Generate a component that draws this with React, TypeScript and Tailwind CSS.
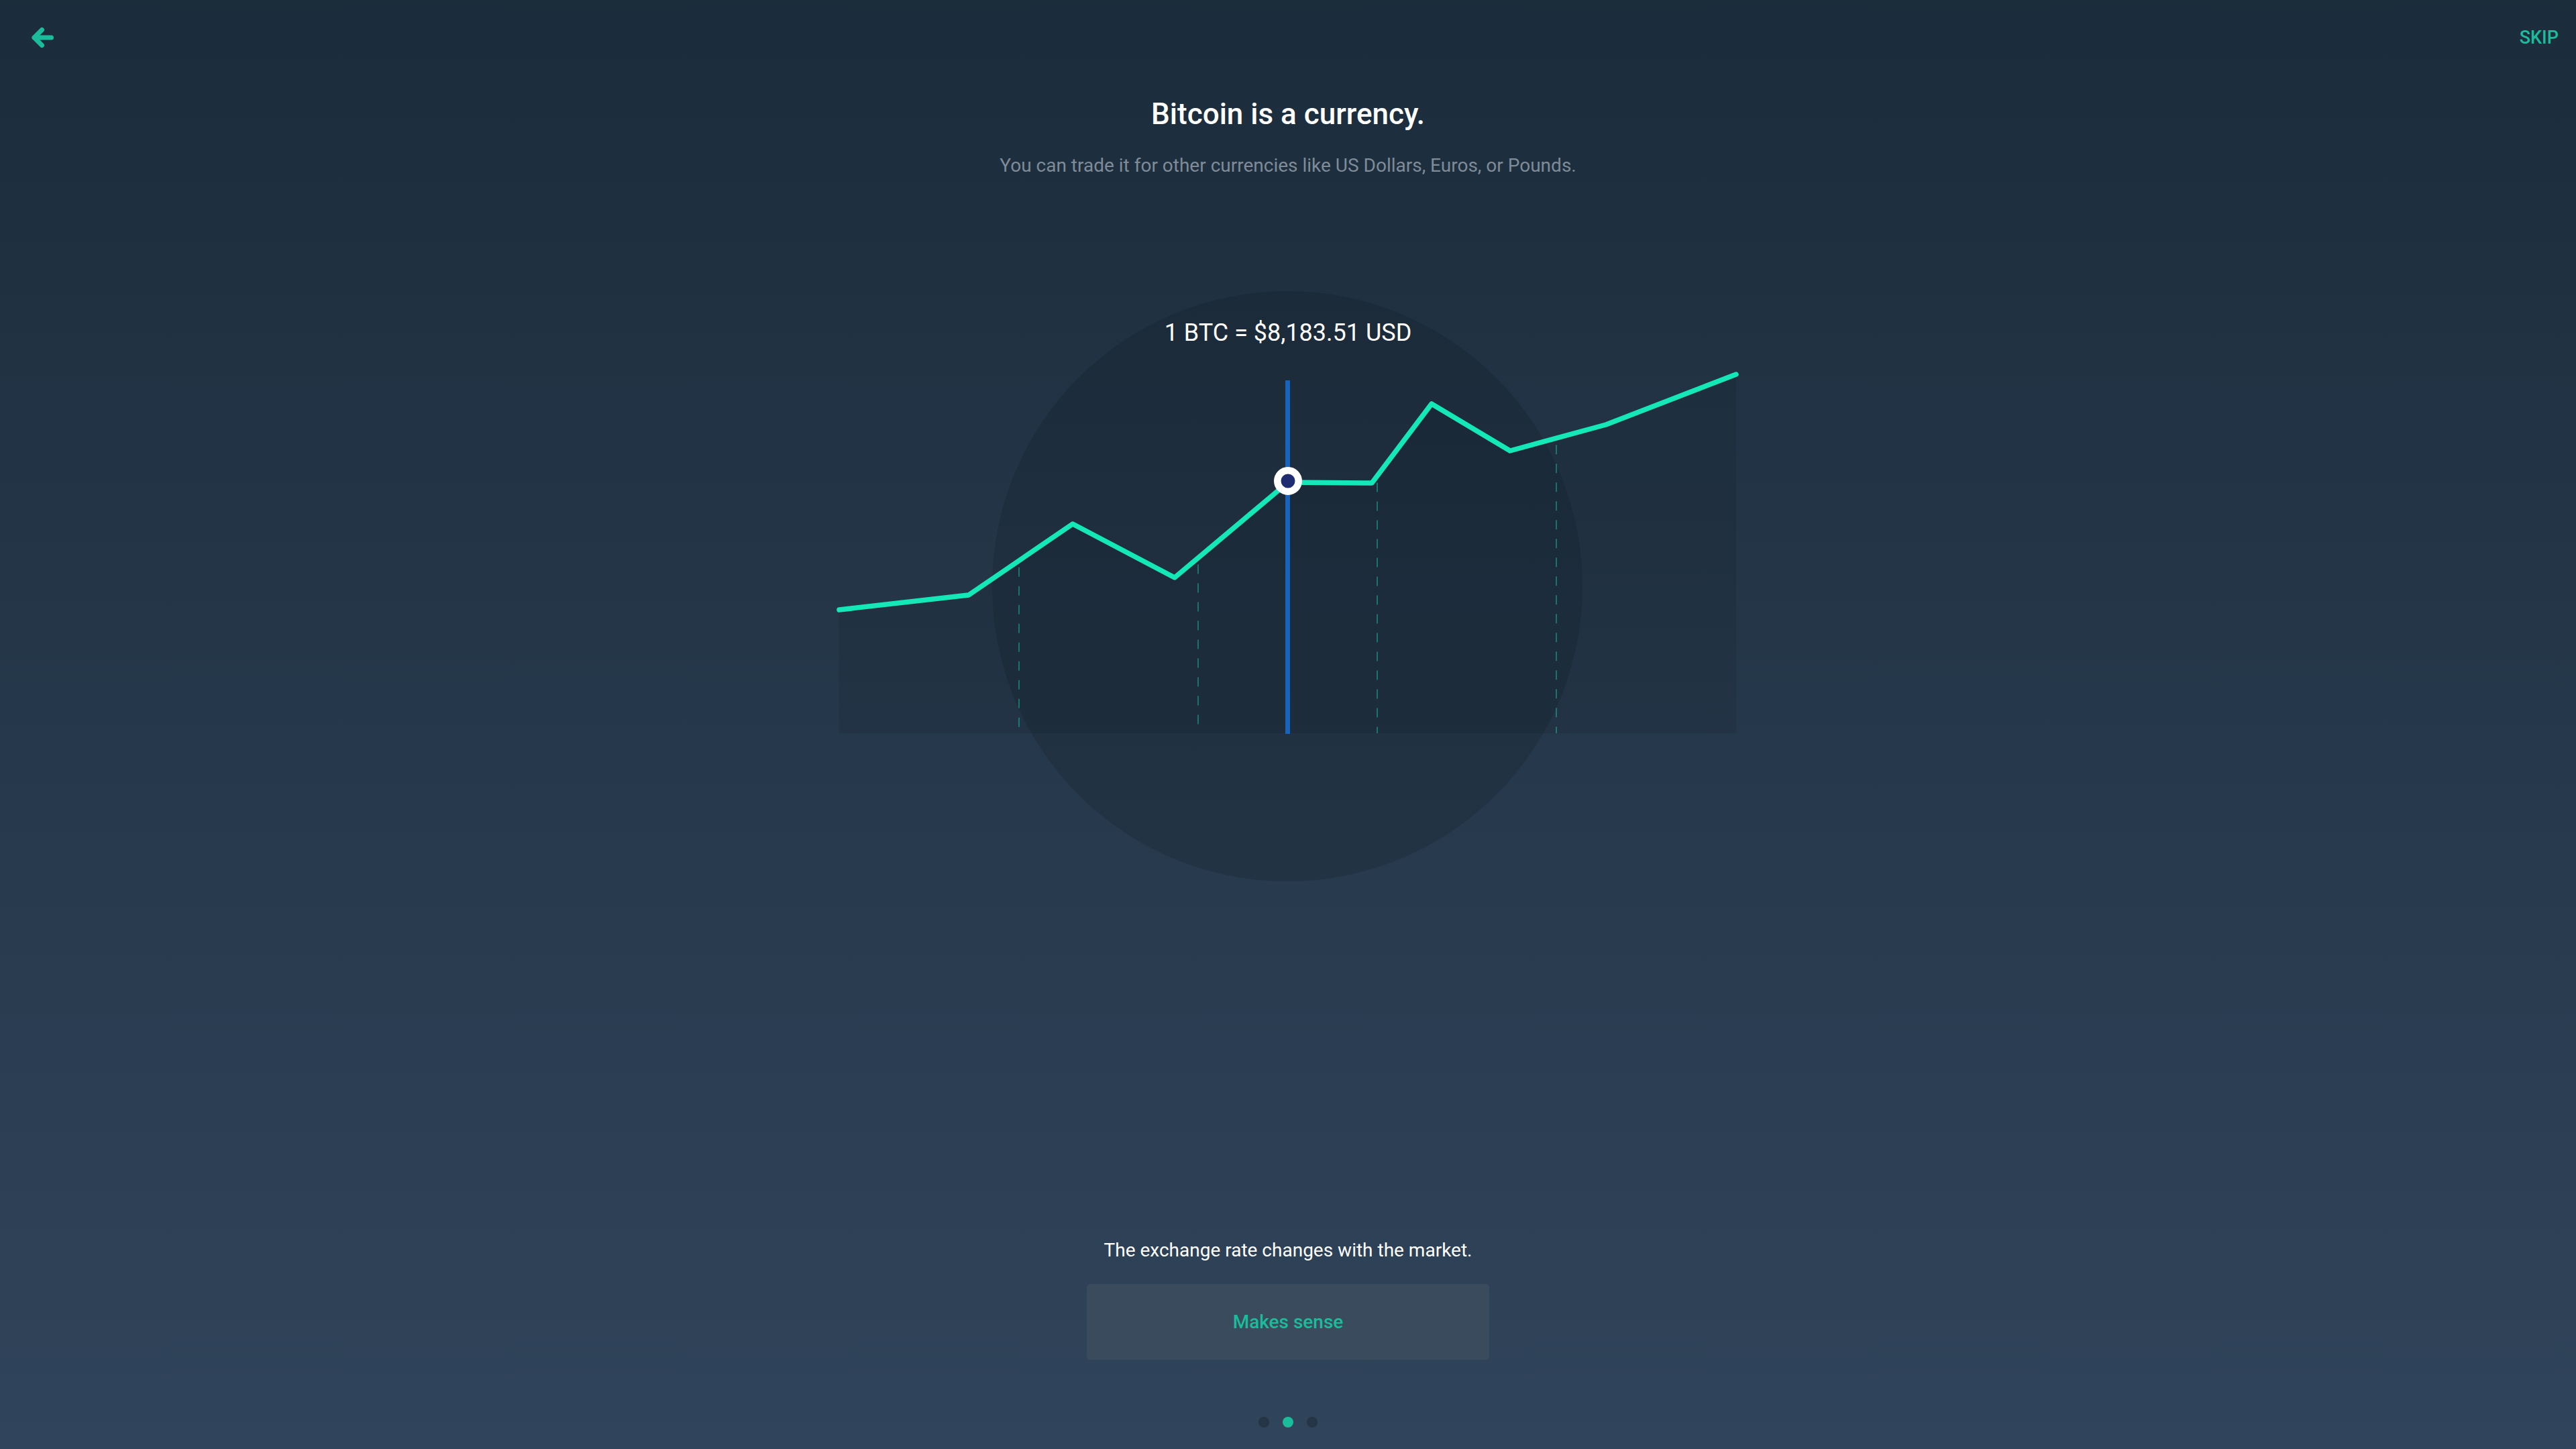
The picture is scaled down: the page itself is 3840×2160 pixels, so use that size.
import React from "react";

const pts: [number, number][] = [
  [1251, 909],
  [1444, 887],
  [1599, 781],
  [1751, 861],
  [1920, 719],
  [2045, 720],
  [2134, 602],
  [2251, 672],
  [2394, 633],
  [2588, 558],
];

function yAt(x: number): number {
  for (let i = 0; i < pts.length - 1; i++) {
    const [x1, y1] = pts[i];
    const [x2, y2] = pts[i + 1];
    if (x >= x1 && x <= x2) {
      return y1 + ((x - x1) / (x2 - x1)) * (y2 - y1);
    }
  }
  return 1093;
}

function Chart() {
  const line = pts.map((p) => p.join(",")).join(" ");
  const area = line + " 2588,1093 1251,1093";
  const grid = [1519, 1786, 2053, 2320];
  return (
    <div className="relative w-[1400px] h-[900px]">
      <svg
        width="1400"
        height="900"
        viewBox="1220 430 1400 900"
        className="absolute left-0 top-0"
      >
        <circle cx="1919" cy="874" r="440" fill="#000" fillOpacity="0.11" />
        <polygon points={area} fill="#000" fillOpacity="0.08" />
        {grid.map((x) => (
          <line
            key={x}
            x1={x}
            x2={x}
            y1={yAt(x) + 10}
            y2={1093}
            stroke="#1abc9c"
            strokeOpacity="0.5"
            strokeWidth="2"
            strokeDasharray="14 14"
          />
        ))}
        <line x1="1919.5" x2="1919.5" y1="567" y2="1094" stroke="#1764bf" strokeWidth="7" />
        <polyline
          points={line}
          fill="none"
          stroke="#14e8b8"
          strokeWidth="7.5"
          strokeLinecap="round"
          strokeLinejoin="round"
        />
        <circle cx="1920" cy="717" r="15.75" fill="#1e2d6f" stroke="#ffffff" strokeWidth="10.5" />
      </svg>
      <div className="absolute left-0 right-0 top-[48px] text-center text-[36px] leading-[36px] text-white">
        1 BTC = $8,183.51 USD
      </div>
    </div>
  );
}

export default function App() {
  return (
    <div className="w-full h-[2160px] flex flex-col items-center bg-linear-to-b from-[#1b2c3b] to-[#30445b] font-[Roboto,sans-serif] overflow-hidden">
      <div className="w-full h-[112px] flex justify-between items-start">
        <svg width="40" height="40" viewBox="0 0 40 40" className="ml-[40px] mt-[36px]">
          <path
            d="M11 20 H36.5 M22.5 8.5 L11 20 L22.5 31.5"
            fill="none"
            stroke="#1abc9c"
            strokeWidth="7"
            strokeLinecap="round"
            strokeLinejoin="round"
          />
        </svg>
        <div className="mr-[26px] mt-[43px] text-[27px] leading-[27px] font-medium text-[#1abc9c]">
          SKIP
        </div>
      </div>
      <h1 className="mt-[36px] text-[44px] leading-[44px] font-medium text-white">
        Bitcoin is a currency.
      </h1>
      <p className="mt-[41px] text-[28px] leading-[28px] text-[#7f8b97]">
        You can trade it for other currencies like US Dollars, Euros, or Pounds.
      </p>
      <div className="mt-[169px]">
        <Chart />
      </div>
      <p className="mt-[520px] text-[28px] leading-[28px] text-white">
        The exchange rate changes with the market.
      </p>
      <button className="mt-[36px] w-[600px] h-[113px] rounded-[5px] bg-[#3a4b5d] flex items-center justify-center text-[28px] font-medium text-[#1abc9c]">
        Makes sense
      </button>
      <div className="mt-[85px] flex gap-[20px]">
        <span className="w-[16px] h-[16px] rounded-full bg-[#253546]" />
        <span className="w-[16px] h-[16px] rounded-full bg-[#1abc9c]" />
        <span className="w-[16px] h-[16px] rounded-full bg-[#253546]" />
      </div>
    </div>
  );
}
